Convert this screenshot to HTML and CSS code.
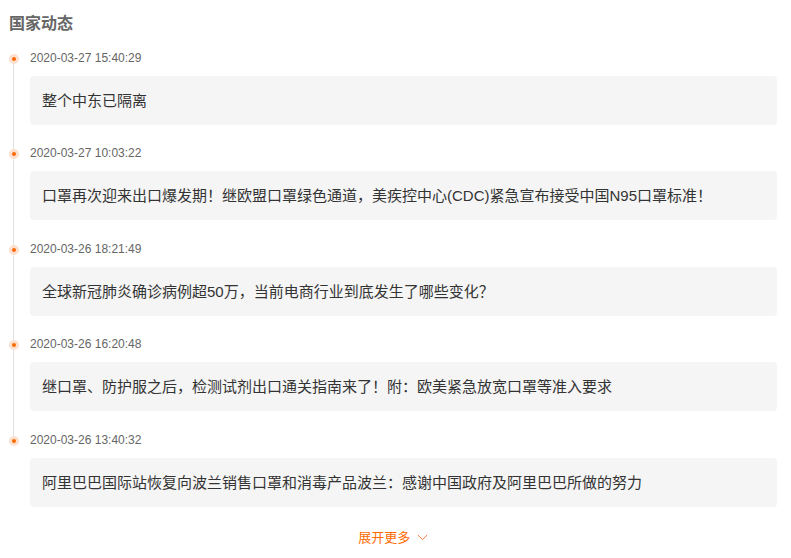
FILE: index.html
```html
<!DOCTYPE html>
<html lang="zh-cn">
<head>
    <meta charset="UTF-8">
    <title>国家动态</title>
    <link rel="stylesheet" href="styles.css">
</head>
<body>
    <div class="dongtai">
        <h3 class="titulo">国家动态</h3>
        <ul class="timeline">
            <li class="item">
                <span class="ponto"></span>
                <div class="data">2020-03-27 15:40:29</div>
                <div class="cartao">整个中东已隔离</div>
            </li>
            <li class="item">
                <span class="ponto"></span>
                <div class="data">2020-03-27 10:03:22</div>
                <div class="cartao">口罩再次迎来出口爆发期！继欧盟口罩绿色通道，美疾控中心(CDC)紧急宣布接受中国N95口罩标准！</div>
            </li>
            <li class="item">
                <span class="ponto"></span>
                <div class="data">2020-03-26 18:21:49</div>
                <div class="cartao">全球新冠肺炎确诊病例超50万，当前电商行业到底发生了哪些变化？</div>
            </li>
            <li class="item">
                <span class="ponto"></span>
                <div class="data">2020-03-26 16:20:48</div>
                <div class="cartao">继口罩、防护服之后，检测试剂出口通关指南来了！附：欧美紧急放宽口罩等准入要求</div>
            </li>
            <li class="item">
                <span class="ponto"></span>
                <div class="data">2020-03-26 13:40:32</div>
                <div class="cartao">阿里巴巴国际站恢复向波兰销售口罩和消毒产品波兰：感谢中国政府及阿里巴巴所做的努力</div>
            </li>
        </ul>
        <div class="mais">
            <a href="#">展开更多
                <svg width="11" height="7" viewBox="0 0 11 7"><path d="M0.8 1 L5.5 5.6 L10.2 1" fill="none" stroke="#ff7a3d" stroke-width="1"/></svg>
            </a>
        </div>
    </div>
</body>
</html>
```
FILE: styles.css
```css
body{
    margin: 0;
    background: #fff;
    font-family: "Liberation Sans", "Noto Sans CJK SC", sans-serif;
}
.dongtai{
    padding: 12px 14px 0 9px;
}
.titulo{
    margin: 0;
    font-size: 16px;
    line-height: 24px;
    color: #666;
    font-weight: bold;
}
.timeline{
    list-style: none;
    margin: 12px 0 0 0;
    padding: 0;
}
.item{
    position: relative;
    padding-left: 21px;
    padding-bottom: 18px;
}
.item:nth-child(2n){
    padding-bottom: 19px;
}
.item::before{
    content: "";
    position: absolute;
    left: 4px;
    top: 12px;
    bottom: -12px;
    width: 1px;
    background: #e2e2e2;
}
.item:last-child::before{
    display: none;
}
.ponto{
    position: absolute;
    left: 0;
    top: 6px;
    width: 10px;
    height: 10px;
    border-radius: 50%;
    background: #fde0cf;
    z-index: 1;
}
.ponto::after{
    content: "";
    position: absolute;
    left: 3px;
    top: 3px;
    width: 4px;
    height: 4px;
    border-radius: 50%;
    background: #ff6a00;
}
.data{
    font-size: 12px;
    line-height: 20px;
    color: #666;
}
.cartao{
    margin-top: 8px;
    background: #f5f5f5;
    border-radius: 4px;
    padding: 14px 12px;
    font-size: 15px;
    line-height: 21px;
    color: #333;
}
.mais{
    text-align: center;
    padding-top: 3px;
}
.mais a{
    color: #ff6a00;
    font-size: 13px;
    line-height: 20px;
    text-decoration: none;
}
.mais svg{
    margin-left: 3px;
    vertical-align: 1px;
}
```
